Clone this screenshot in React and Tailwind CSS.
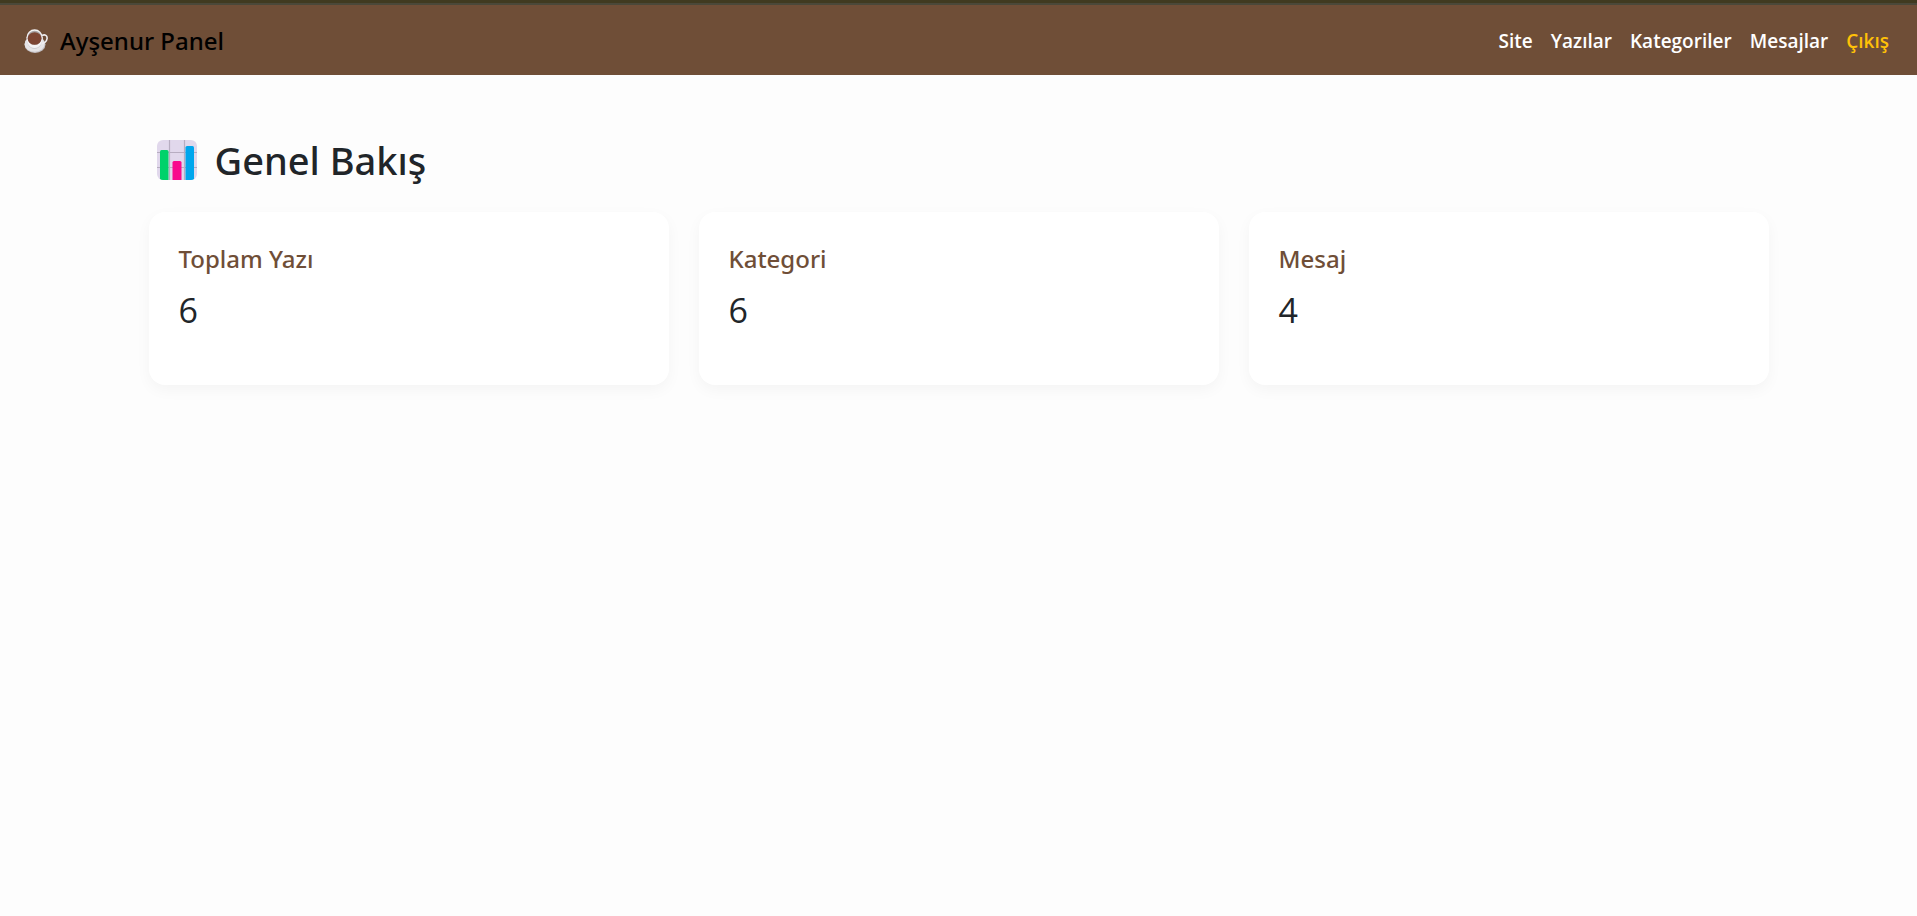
const links = ["Site", "Yazılar", "Kategoriler", "Mesajlar"];

const stats = [
  { title: "Toplam Yazı", value: 6 },
  { title: "Kategori", value: 6 },
  { title: "Mesaj", value: 4 },
];

function CoffeeIcon() {
  return (
    <svg className="h-6 w-6" viewBox="0 0 24 24" aria-hidden="true">
      <ellipse cx="11" cy="15.500" rx="10.500" ry="8.500" fill="#c4c1c5" />
      <ellipse cx="10.600" cy="15" rx="10" ry="7.800" fill="#e6e4e6" />
      <path d="M18 6.500c3-1.600 5.400.200 5.100 3-.400 3-3 5-6.500 5.200" fill="none" stroke="#efedf0" strokeWidth="1.600" />
      <path d="M2.700 8.500C2.700 15 5.500 20 10.500 20S18.500 15 18.500 8.500Z" fill="#cfccd0" />
      <path d="M2.700 8.500C2.700 14.500 5.500 19 10.500 19S18.500 14.500 18.500 8.500Z" fill="#f4f2f4" />
      <ellipse cx="10.600" cy="8.300" rx="8.100" ry="8" fill="#f4f2f4" />
      <ellipse cx="10.600" cy="8.700" rx="7" ry="7" fill="#a9a5a8" />
      <ellipse cx="10.600" cy="9.500" rx="6.900" ry="6.300" fill="#7d4533" />
    </svg>
  );
}

function ChartIcon() {
  return (
    <svg className="h-10 w-10" viewBox="0 0 40 40" aria-hidden="true">
      <rect width="40" height="40" rx="6" fill="#e1d8ec" />
      <path d="M12.500 0V40M27.500 0V40M0 12.500H40M0 27.500H40" stroke="#b7adc1" strokeWidth="1.200" />
      <path d="M3 39V11.500Q3 10 4.500 10H10Q11.500 10 11.500 11.500V40H6Q4 40 3 39Z" fill="#00d26a" />
      <path d="M15.500 40V22.500Q15.500 21 17 21H23Q24.500 21 24.500 22.500V40Z" fill="#f8098d" />
      <path d="M28.500 40V7.500Q28.500 6 30 6H35.500Q37 6 37 7.500V39Q36 40 34 40Z" fill="#00a6ed" />
    </svg>
  );
}

export default function App() {
  return (
    <div className="min-h-screen bg-[#fdfdfd] font-['Noto_Sans','Open_Sans',sans-serif] text-[#212529]">
      <header className="border-t-3 border-[#403a20] bg-[#6f4e37]">
        <nav className="flex h-18 items-center justify-between border-t-2 border-[#4a4839] pt-0.5 pr-7 pl-6">
          <a href="#" className="flex items-center gap-3 text-2xl font-medium text-black">
            <CoffeeIcon />
            Ayşenur Panel
          </a>
          <ul className="flex gap-[18px] font-['Open_Sans','Noto_Sans',sans-serif] text-[19px] leading-7 font-semibold text-white">
            {links.map((label) => (
              <li key={label}>
                <a href="#">{label}</a>
              </li>
            ))}
            <li>
              <a href="#" className="text-[#ffc107]">
                Çıkış
              </a>
            </li>
          </ul>
        </nav>
      </header>

      <main className="mx-auto max-w-[1650px] px-[15px] pt-[61px]">
        <h1 className="flex items-center gap-[18px] pl-2 text-[38px] leading-[48px] font-medium">
          <ChartIcon />
          Genel Bakış
        </h1>
        <div className="mt-7 grid grid-cols-3 gap-[30px]">
          {stats.map(({ title, value }) => (
            <section
              key={title}
              className="rounded-2xl bg-white px-[30px] pt-8 pb-12 shadow-[0_5px_15px_rgba(0,0,0,0.04)]"
            >
              <h2 className="text-2xl leading-[30px] font-medium text-[#6f4e37]">{title}</h2>
              <p className="mt-[10px] font-['Open_Sans','Noto_Sans',sans-serif] text-[34px] leading-[53px]">
                {value}
              </p>
            </section>
          ))}
        </div>
      </main>
    </div>
  );
}
